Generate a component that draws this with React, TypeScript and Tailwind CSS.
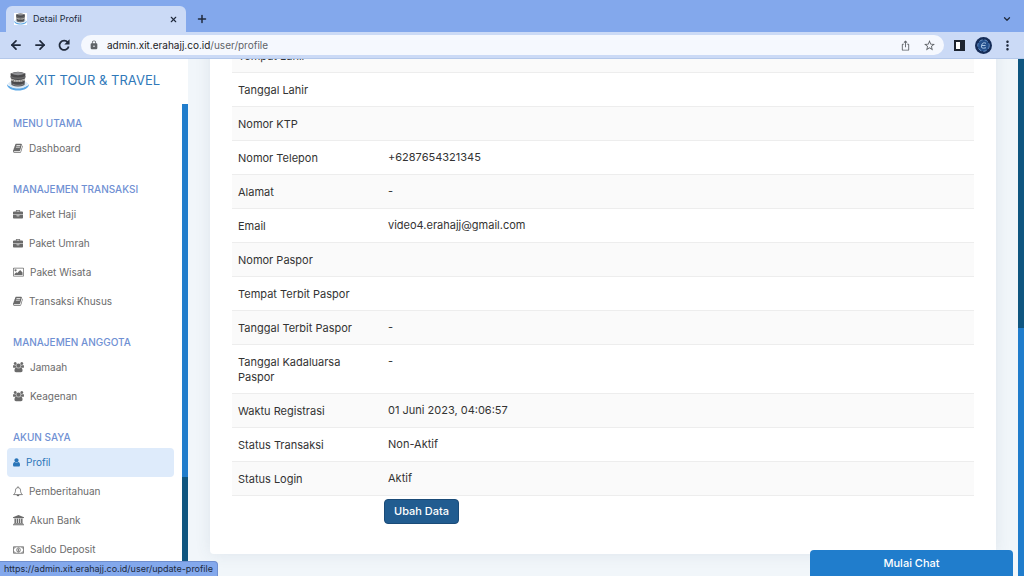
import type { ReactNode } from "react";
import { ArrowLeft, ArrowRight, ChevronDown, Plus, X } from "lucide-react";
import { MdIosShare, MdLock, MdMoreVert, MdStarBorder } from "react-icons/md";

type IconName = "book" | "briefcase" | "image" | "users" | "user" | "bell" | "bank" | "money";

const iconPaths: Record<IconName, { box: string; className: string; content: ReactNode }> = {
  book: {
    box: "64 0 1700 1792",
    className: "w-[10px]",
    content: (
      <path d="M1703 478q40 57 18 129l-275 906q-19 64-76.500 107.500t-122.500 43.500h-923q-77 0-148.500-53.500t-99.500-131.500q-24-67-2-127 0-4 3-27t4-37q1-8-3-21.500t-3-19.500q2-11 8-21t16.500-23.500 16.500-23.500q23-38 45-91.500t30-91.500q3-10 .5-30t-.5-28q3-11 17-28t17-23q21-36 42-92t25-90q1-9-2.500-32t.5-28q4-13 22-30.500t22-22.500q19-26 42.500-84.500t27.500-96.500q1-8-3-25.500t-2-26.500q2-8 9-18t18-23 17-21q8-12 16.500-30.500t15-35 16-36 19.500-32 26.500-23.500 36-11.500 47.500 5.500l-1 3q38-9 51-9h761q74 0 114 56t18 130l-274 906q-36 119-71.500 153.500t-128.500 34.500h-869q-27 0-38 15-11 16-1 43 24 70 144 70h923q29 0 56-15.500t35-41.500l300-987q7-22 5-57 38 15 59 43zm-1064 2q-4 13 2 22.500t20 9.500h608q13 0 25.500-9.500t16.500-22.500l21-64q4-13-2-22.500t-20-9.500h-608q-13 0-25.500 9.500t-16.500 22.500zm-83 256q-4 13 2 22.500t20 9.500h608q13 0 25.500-9.500t16.500-22.500l21-64q4-13-2-22.500t-20-9.500h-608q-13 0-25.500 9.500t-16.500 22.500z" />
    ),
  },
  briefcase: {
    box: "0 0 1792 1600",
    className: "w-[10px]",
    content: (
      <path d="M640 256h512v-128h-512v128zm1152 640v480q0 66-47 113t-113 47h-1472q-66 0-113-47t-47-113v-480h672v160q0 26 19 45t45 19h320q26 0 45-19t19-45v-160h672zm-768 0v128h-256v-128h256zm768-480v384h-1792v-384q0-66 47-113t113-47h352v-160q0-40 28-68t68-28h576q40 0 68 28t28 68v160h352q66 0 113 47t47 113z" />
    ),
  },
  image: {
    box: "-64 0 1920 1792",
    className: "w-[11px]",
    content: (
      <path d="M576 576q0 80-56 136t-136 56-136-56-56-136 56-136 136-56 136 56 56 136zm1024 384v448h-1408v-192l320-320 160 160 512-512zm96-704h-1600q-13 0-22.500 9.500t-9.500 22.500v1216q0 13 9.500 22.500t22.500 9.500h1600q13 0 22.500-9.500t9.500-22.500v-1216q0-13-9.500-22.500t-22.500-9.500zm160 32v1216q0 66-47 113t-113 47h-1600q-66 0-113-47t-47-113v-1216q0-66 47-113t113-47h1600q66 0 113 47t47 113z" />
    ),
  },
  users: {
    box: "0 0 1920 1792",
    className: "w-[11px]",
    content: (
      <path d="M593 896q-162 5-265 128h-134q-82 0-138-40.500t-56-118.500q0-353 124-353 6 0 43.500 21t97.500 42.500 119 21.500q67 0 133-23-5 37-5 66 0 139 81 256zm1071 637q0 120-73 189.500t-194 69.500h-874q-121 0-194-69.500t-73-189.500q0-53 3.500-103.500t14-109 26.500-108.500 43-97.500 62-81 85.500-53.500 111.500-20q10 0 43 21.500t73 48 107 48 135 21.500 135-21.500 107-48 73-48 43-21.500q61 0 111.500 20t85.500 53.500 62 81 43 97.500 26.500 108.500 14 109 3.500 103.500zm-1024-1277q0 106-75 181t-181 75-181-75-75-181 75-181 181-75 181 75 75 181zm704 384q0 159-112.500 271.500t-271.500 112.500-271.500-112.500-112.500-271.500 112.500-271.500 271.500-112.500 271.500 112.500 112.500 271.500zm576 225q0 78-56 118.500t-138 40.500h-134q-103-123-265-128 81-117 81-256 0-29-5-66 66 23 133 23 59 0 119-21.500t97.500-42.500 43.500-21q124 0 124 353zm-128-609q0 106-75 181t-181 75-181-75-75-181 75-181 181-75 181 75 75 181z" />
    ),
  },
  user: {
    box: "256 100 1280 1600",
    className: "w-[7px]",
    content: (
      <path d="M1536 1399q0 109-62.500 187t-150.500 78h-854q-88 0-150.500-78t-62.500-187q0-85 8.500-160.500t31.500-152 58.500-131 94-89 134.500-34.500q131 128 313 128t313-128q76 0 134.500 34.500t94 89 58.500 131 31.500 152 8.500 160.500zm-256-887q0 159-112.500 271.500t-271.500 112.500-271.500-112.500-112.500-271.500 112.500-271.500 271.500-112.500 271.500 112.500 112.500 271.500z" />
    ),
  },
  bell: {
    box: "1 0 18 19",
    className: "w-[10px]",
    content: (
      <>
        <path d="M10 0.500v2.500M2 15.500c2.500-2.200 3.500-4.500 3.500-8C5.500 4.500 7.500 3 10 3s4.500 1.500 4.500 4.500c0 3.500 1 5.800 3.500 8z" fill="none" stroke="currentColor" strokeWidth="1.500" />
        <path d="M7.500 16h5a2.500 2.500 0 0 1-5 0z" />
      </>
    ),
  },
  bank: {
    box: "0 0 1920 1792",
    className: "w-[11px]",
    content: (
      <path d="M960 0l960 384v128h-128q0 26-20.500 45t-48.500 19h-1526q-28 0-48.500-19t-20.500-45h-128v-128zm-704 640h256v768h128v-768h256v768h128v-768h256v768h128v-768h256v768h59q28 0 48.500 19t20.500 45v64h-1664v-64q0-26 20.500-45t48.500-19h59v-768zm1595 960q28 0 48.500 19t20.500 45v128h-1920v-128q0-26 20.500-45t48.500-19h1782z" />
    ),
  },
  money: {
    box: "0 0 22 16",
    className: "w-[11px]",
    content: (
      <g fill="none" stroke="currentColor" strokeWidth="1.600">
        <path d="M1 1.500h20v13H1z" />
        <path d="M4.500 2q0 2.500-3 2.500M17.500 2q0 2.500 3 2.500M4.500 14q0-2.500-3-2.500M17.500 14q0-2.500 3-2.500M9.500 6.500L11 5.500v5M9 10.500h4" />
        <ellipse cx="11" cy="8" rx="3.600" ry="4.500" />
      </g>
    ),
  },
};

const menuGroups: { title: string; items: { label: string; icon: IconName; active?: boolean }[] }[] = [
  { title: "MENU UTAMA", items: [{ label: "Dashboard", icon: "book" }] },
  {
    title: "MANAJEMEN TRANSAKSI",
    items: [
      { label: "Paket Haji", icon: "briefcase" },
      { label: "Paket Umrah", icon: "briefcase" },
      { label: "Paket Wisata", icon: "image" },
      { label: "Transaksi Khusus", icon: "book" },
    ],
  },
  {
    title: "MANAJEMEN ANGGOTA",
    items: [
      { label: "Jamaah", icon: "users" },
      { label: "Keagenan", icon: "users" },
    ],
  },
  {
    title: "AKUN SAYA",
    items: [
      { label: "Profil", icon: "user", active: true },
      { label: "Pemberitahuan", icon: "bell" },
      { label: "Akun Bank", icon: "bank" },
      { label: "Saldo Deposit", icon: "money" },
    ],
  },
];

const profileRows = [
  { label: "Tempat Lahir", value: "" },
  { label: "Tanggal Lahir", value: "" },
  { label: "Nomor KTP", value: "" },
  { label: "Nomor Telepon", value: "+6287654321345" },
  { label: "Alamat", value: "-" },
  { label: "Email", value: "video4.erahajj@gmail.com" },
  { label: "Nomor Paspor", value: "" },
  { label: "Tempat Terbit Paspor", value: "" },
  { label: "Tanggal Terbit Paspor", value: "-" },
  { label: "Tanggal Kadaluarsa Paspor", value: "-" },
  { label: "Waktu Registrasi", value: "01 Juni 2023, 04:06:57" },
  { label: "Status Transaksi", value: "Non-Aktif" },
  { label: "Status Login", value: "Aktif" },
];

function MenuIcon({ name }: { name: IconName }) {
  const icon = iconPaths[name];
  return (
    <svg viewBox={icon.box} className={`shrink-0 ${icon.className}`} fill="currentColor" aria-hidden="true">
      {icon.content}
    </svg>
  );
}

function Logo({ className }: { className: string }) {
  return (
    <svg viewBox="0 0 44 40" className={className} aria-hidden="true">
      <path d="M0 26c0 8 9 13 22 13s22-5 22-13c-3 5-11 8-22 8S3 31 0 26z" fill="#5ba7e6" />
      <path d="M2 25c3 7 11 10 20 10s17-3 20-10l-5-4H7z" fill="#dbe9f5" />
      <path d="M7 5q15-7 30 0l-2 23q-13 6-26 0z" fill="#4a4a4c" />
      <path d="M8 5q14-6 28 0-14 7-28 0z" fill="#8f9094" />
      <path d="M7 10q15 6 30 0v3q-15 6-30 0z" fill="#6b6b6c" />
      <path d="M8 15q14 6 28 0v4q-14 6-28 0z" fill="#c4c3c0" />
      <path d="M11 18.500q11 3.500 22 0" stroke="#55534f" strokeWidth="1.500" strokeDasharray="3 2" fill="none" />
      <path d="M11 25q11 5 22 0v3q-11 4-22 0z" fill="#7d7d80" />
    </svg>
  );
}

function BrowserBar() {
  return (
    <header className="relative z-10 shrink-0 font-[Inter,sans-serif] text-[#202a3c]">
      <div className="flex h-8 items-end justify-between bg-[#83a8ec] px-1.5">
        <div className="flex items-center gap-2.5">
          <div className="flex h-[26px] w-[180px] items-center rounded-t-md bg-[#cbdaf6] px-2">
            <span className="mr-1.5 flex bg-white">
              <Logo className="h-3 w-[13px]" />
            </span>
            <span className="flex-1 text-[9px]">Detail Profil</span>
            <button aria-label="Tutup tab">
              <X className="size-[9px]" strokeWidth={3} />
            </button>
          </div>
          <button aria-label="Tab baru">
            <Plus className="size-3" strokeWidth={3} />
          </button>
        </div>
        <button aria-label="Cari tab" className="mr-1.5 pb-2">
          <ChevronDown className="size-[10px]" strokeWidth={3} />
        </button>
      </div>
      <div className="flex h-[27px] items-center border-b border-[#b4c8ea] bg-[#cbdaf6] px-[9px]">
        <div className="flex w-[72px] shrink-0 gap-2.5">
          <button aria-label="Kembali">
            <ArrowLeft className="size-3.5" strokeWidth={3} />
          </button>
          <button aria-label="Maju">
            <ArrowRight className="size-3.5" strokeWidth={3} />
          </button>
          <button aria-label="Muat ulang">
            <svg viewBox="0 0 24 24" className="size-3.5" aria-hidden="true">
              <path d="M18.500 7.500A8 8 0 1 0 20 14.500" fill="none" stroke="currentColor" strokeWidth="3" />
              <path d="M21.500 2v9h-9z" fill="currentColor" />
            </svg>
          </button>
        </div>
        <div className="flex h-5 flex-1 items-center rounded-full bg-[#f5f8fe] px-2 text-[#5f6368]">
          <MdLock className="mr-2 size-2.5" />
          <span className="flex-1 text-[10px]">
            <span className="text-[#202124]">admin.xit.erahajj.co.id</span>/user/profile
          </span>
          <button aria-label="Bagikan" className="mr-3">
            <MdIosShare className="size-[11px]" />
          </button>
          <button aria-label="Bookmark">
            <MdStarBorder className="size-[13px]" />
          </button>
        </div>
        <button aria-label="Panel samping" className="ml-2.5 h-[11px] w-[11px] border-2 border-r-5 border-[#1d2430] bg-white" />
        <button aria-label="Akun" className="mr-2 ml-2.5 size-[17px]">
          <svg viewBox="0 0 34 34" aria-hidden="true">
            <circle cx="17" cy="17" r="17" fill="#152c57" />
            <circle cx="17" cy="17" r="11.500" fill="#24508c" stroke="#6f9bcf" strokeWidth="1.800" strokeDasharray="7 4" />
            <path d="M22 12.500q-7-3-9 4.500t9 4.500M13 17h8" stroke="#a9c6e6" strokeWidth="2" fill="none" />
          </svg>
        </button>
        <button aria-label="Menu">
          <MdMoreVert className="size-[15px]" />
        </button>
      </div>
    </header>
  );
}

function Sidebar() {
  return (
    <aside className="flex w-[188px] shrink-0 flex-col overflow-hidden bg-white">
      <a href="#" className="flex h-[45px] shrink-0 items-center gap-1.5 px-[7px] pb-0.5 text-[13px] whitespace-nowrap text-[#3079b9]">
        <Logo className="h-5 w-[22px]" />
        XIT TOUR &amp; TRAVEL
      </a>
      <div className="flex min-h-0 flex-1">
        <nav className="min-w-0 flex-1 overflow-hidden pl-[7px]">
          {menuGroups.map((group) => (
            <section key={group.title} className="pt-3 first:pt-[5px]">
              <h2 className="h-[25px] px-1.5 pt-1.5 text-[10px] leading-4 font-medium whitespace-nowrap text-[#6f90d3]">
                {group.title}
              </h2>
              <ul>
                {group.items.map((item) => (
                  <li key={item.label}>
                    <a
                      href="#"
                      className={`flex h-[29px] items-center gap-1.5 rounded-sm px-1.5 text-[10px] ${
                        item.active ? "bg-[#deebfb] text-[#2a75b8]" : "text-[#6b6b6b]"
                      }`}
                    >
                      <MenuIcon name={item.icon} />
                      {item.label}
                    </a>
                  </li>
                ))}
              </ul>
            </section>
          ))}
        </nav>
        <div className="ml-2 flex w-1.5 flex-col bg-[#0f5680]">
          <div className="h-[79%] bg-[#207dcc]" />
        </div>
      </div>
    </aside>
  );
}

export default function App() {
  return (
    <div className="flex h-screen flex-col overflow-hidden bg-[#f1f6fa] font-[Inter,'Open_Sans',sans-serif]">
      <BrowserBar />
      <div className="flex min-h-0 flex-1">
        <Sidebar />
        <main className="min-w-0 flex-1 overflow-hidden px-[22px]">
          {/* Card is scrolled, so its first row sits partly under the toolbar */}
          <div className="-mt-5 rounded-b bg-white px-[22px] pb-[30px] shadow-[0_0_16px_rgba(60,80,110,0.1)]">
            <table className="w-full table-fixed text-left text-[11px] text-[#333]">
              <tbody>
                {profileRows.map((row) => (
                  <tr key={row.label} className="border-b border-[#ededed] odd:bg-[#fafafa]">
                    <th scope="row" className="w-[150px] px-1.5 pt-2.5 pb-2 leading-[15px] font-normal">
                      {row.label}
                    </th>
                    <td className="px-1.5 pt-2.5 pb-2 align-top leading-[13px]">{row.value}</td>
                  </tr>
                ))}
              </tbody>
            </table>
            <button className="mt-[3px] ml-[152px] h-[25px] rounded-sm border border-[#1a4b78] bg-[#215c90] px-[9px] text-[11px] font-medium text-white">
              Ubah Data
            </button>
          </div>
        </main>
        <div className="w-1.5 shrink-0 bg-[#207dcc]">
          <div className="h-[52%] bg-[#0f5680]" />
        </div>
      </div>

      <button className="fixed right-[11px] bottom-0 h-[26px] w-[203px] rounded-t-sm bg-[#207dcc] text-[11px] font-medium text-white">
        Mulai Chat
      </button>
      <div className="fixed bottom-0 left-0 rounded-tr-sm border-t border-r border-[#6f8fd0] bg-[#83a8ec] px-1 text-[9px] leading-[14px] text-[#202a3c]">
        https://admin.xit.erahajj.co.id/user/update-profile
      </div>
    </div>
  );
}
